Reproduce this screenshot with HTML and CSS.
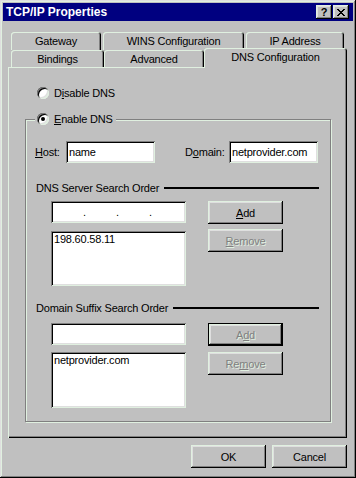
FILE: index.html
```html
<!DOCTYPE html>
<html lang="en">
  <head>
    <meta charset="UTF-8" />
    <meta name="viewport" content="width=device-width, initial-scale=1.0" />
    <title>TCP/IP Properties</title>
    <link rel="stylesheet" href="styles.css">
  </head>

  <body>
    <div class="window">
      <div class="titlebar">
        <span class="title">TCP/IP Properties</span>
        <div class="title-buttons">
          <span class="tbtn">?</span>
          <span class="tbtn">
            <svg width="8" height="7" viewBox="0 0 8 7" shape-rendering="crispEdges">
              <path d="M0 0h2v1h-2z M6 0h2v1h-2z M1 1h2v1h-2z M5 1h2v1h-2z M2 2h4v1h-4z M3 3h2v1h-2z M2 4h4v1h-4z M1 5h2v1h-2z M5 5h2v1h-2z M0 6h2v1h-2z M6 6h2v1h-2z" fill="#000"/>
            </svg>
          </span>
        </div>
      </div>

      <div class="content">
        <!-- tabs -->
        <div class="tabs">
          <div class="tab-row back">
            <div class="tab t-gateway">Gateway</div>
            <div class="tab t-wins">WINS Configuration</div>
            <div class="tab t-ip">IP Address</div>
          </div>
          <div class="tab-row front">
            <div class="tab t-bindings">Bindings</div>
            <div class="tab t-advanced">Advanced</div>
            <div class="tab t-dns selected">DNS Configuration</div>
          </div>
        </div>

        <div class="panel">
          <div class="radio-row disable">
            <span class="radio"></span>
            <span>D<u>i</u>sable DNS</span>
          </div>

          <div class="group">
            <div class="radio-row legend">
              <span class="radio checked"></span>
              <span><u>E</u>nable DNS</span>
            </div>

            <div class="field-row">
              <span class="lbl-host"><u>H</u>ost:</span>
              <div class="input small">name</div>
              <span class="lbl-domain">D<u>o</u>main:</span>
              <div class="input small">netprovider.com</div>
            </div>

            <!-- DNS servers -->
            <div class="section-head">
              <span>DNS Server Search Order</span>
              <span class="rule"></span>
            </div>
            <div class="section-body">
              <div class="fields">
                <div class="input ip">
                  <span class="oct"></span><span class="dot">.</span>
                  <span class="oct"></span><span class="dot">.</span>
                  <span class="oct"></span><span class="dot">.</span>
                </div>
                <div class="list">198.60.58.11</div>
              </div>
              <div class="side">
                <div class="btn"><span><u>A</u>dd</span></div>
                <div class="btn disabled"><span><u>R</u>emove</span></div>
              </div>
            </div>

            <!-- domain suffixes -->
            <div class="section-head second">
              <span>Domain Suffix Search Order</span>
              <span class="rule"></span>
            </div>
            <div class="section-body second">
              <div class="fields">
                <div class="input"></div>
                <div class="list">netprovider.com</div>
              </div>
              <div class="side">
                <div class="btn disabled default"><span>A<u>d</u>d</span></div>
                <div class="btn disabled"><span>Re<u>m</u>ove</span></div>
              </div>
            </div>
          </div>
        </div>

        <div class="dialog-buttons">
          <div class="btn">OK</div>
          <div class="btn">Cancel</div>
        </div>
      </div>
    </div>
  </body>
</html>
```

FILE: styles.css
```css
/* Base */
body {
  margin: 0;
  font-family: "Liberation Sans", Arial, sans-serif;
  font-size: 11px;
  letter-spacing: -0.2px;
  color: #000;
  background: #c0c0c0;
}

/* Window frame */
.window {
  width: 356px;
  height: 478px;
  box-sizing: border-box;
  padding: 3px;
  background: #c0c0c0;
  box-shadow: inset -1px -1px 0 #000, inset 1px 1px 0 #dfdfdf,
    inset -2px -2px 0 #808080, inset 2px 2px 0 #e0f0e0;
}

.titlebar {
  height: 18px;
  background: #000080;
  color: #fff;
  display: flex;
  align-items: center;
  justify-content: space-between;
  padding: 0 4px 0 3px;
}

.title {
  font-weight: bold;
  font-size: 12px;
  letter-spacing: 0;
}

.title-buttons {
  display: flex;
  gap: 1px;
}

.tbtn {
  width: 16px;
  height: 14px;
  box-sizing: border-box;
  display: flex;
  align-items: center;
  justify-content: center;
  background: #c0c0c0;
  color: #000;
  font-weight: bold;
  font-size: 11px;
  box-shadow: inset -1px -1px 0 #000, inset 1px 1px 0 #e0f0e0,
    inset -2px -2px 0 #808080, inset 2px 2px 0 #dfdfdf;
}

.content {
  padding: 11px 6px 0 5px;
}

/* Tabs */
.tabs {
  padding-left: 3px;
}

.tab-row {
  display: flex;
  align-items: flex-start;
}

.tab-row.back {
  height: 18px;
  gap: 2px;
}

.tab-row.front {
  height: 17px;
}

.tab {
  height: 100%;
  box-sizing: border-box;
  display: flex;
  align-items: center;
  justify-content: center;
  border-radius: 3px 3px 0 0;
  box-shadow: inset 1px 1px 0 #e0f0e0, inset -1px 0 0 #000,
    inset -2px 0 0 #808080;
}

.t-gateway { width: 90px; }
.t-wins { width: 141px; }
.t-ip { width: 98px; }
.t-bindings { width: 93px; }
.t-advanced { width: 100px; }
.t-dns { width: 143px; }

.tab.selected {
  height: 20px;
  margin-top: -2px;
  padding-bottom: 2px;
  position: relative;
  z-index: 1;
  background: #c0c0c0;
}

/* Panel */
.panel {
  height: 371px;
  box-sizing: border-box;
  padding-top: 20px;
  box-shadow: inset 1px 1px 0 #e0f0e0, inset -1px -1px 0 #000,
    inset -2px -2px 0 #808080;
}

.radio-row {
  display: flex;
  align-items: center;
  gap: 5px;
}

.disable {
  height: 12px;
  margin-left: 29px;
}

.radio {
  flex: none;
  width: 12px;
  height: 12px;
  border-radius: 50%;
  background: #fff;
  display: grid;
  place-items: center;
  box-shadow: inset 1px 1px 0 #808080, inset -1px -1px 0 #e0f0e0,
    inset 2px 2px 0 #000, inset -2px -2px 0 #dfdfdf;
}

.radio.checked::after {
  content: "";
  width: 4px;
  height: 4px;
  border-radius: 50%;
  background: #000;
}

/* Group box */
.group {
  position: relative;
  margin: 20px 0 0 17px;
  width: 306px;
  height: 303px;
  box-sizing: border-box;
  border: 1px solid #808080;
  box-shadow: 1px 1px 0 #e0f0e0, inset 1px 1px 0 #e0f0e0;
}

.legend {
  position: absolute;
  left: 9px;
  top: -8px;
  height: 13px;
  padding: 0 3px 0 2px;
  background: #c0c0c0;
}

.field-row {
  display: flex;
  align-items: center;
  height: 22px;
  margin: 21px 0 0 9px;
}

.lbl-host { width: 31px; }

.lbl-domain {
  width: 44px;
  margin-left: 30px;
}

.input {
  height: 22px;
  box-sizing: border-box;
  padding: 0 3px;
  display: flex;
  align-items: center;
  background: #fff;
  box-shadow: inset 1px 1px 0 #808080, inset -1px -1px 0 #e0f0e0,
    inset 2px 2px 0 #000, inset -2px -2px 0 #dfdfdf;
}

.input.small { width: 89px; }

.ip { padding-left: 2px; }
.ip .oct { width: 30px; }
.ip .dot { width: 3px; }

.section-head {
  display: flex;
  align-items: center;
  height: 13px;
  margin: 18px 11px 0 10px;
}

.section-head.second { margin-top: 15px; }

.rule {
  flex: 1;
  height: 2px;
  margin-left: 5px;
  background: #000;
}

.section-body {
  display: flex;
  gap: 22px;
  margin: 7px 0 0 25px;
}

.section-body.second { margin-top: 9px; }

.fields {
  width: 135px;
  display: flex;
  flex-direction: column;
  gap: 8px;
}

.list {
  height: 55px;
  box-sizing: border-box;
  padding: 2px 3px;
  line-height: 13px;
  background: #fff;
  box-shadow: inset 1px 1px 0 #808080, inset -1px -1px 0 #e0f0e0,
    inset 2px 2px 0 #000, inset -2px -2px 0 #dfdfdf;
}

.second .fields { gap: 7px; }
.second .list { height: 56px; }

.side {
  display: flex;
  flex-direction: column;
  gap: 5px;
}

.second .side { gap: 6px; }

/* Buttons */
.btn {
  width: 75px;
  height: 23px;
  box-sizing: border-box;
  display: flex;
  align-items: center;
  justify-content: center;
  box-shadow: inset -1px -1px 0 #000, inset 1px 1px 0 #e0f0e0,
    inset -2px -2px 0 #808080, inset 2px 2px 0 #dfdfdf;
}

.btn.disabled {
  color: #808080;
  text-shadow: 1px 1px 0 #e0f0e0;
}

.btn.default {
  border: 1px solid #000;
}

.dialog-buttons {
  display: flex;
  justify-content: flex-end;
  gap: 6px;
  margin-top: 7px;
}
```
